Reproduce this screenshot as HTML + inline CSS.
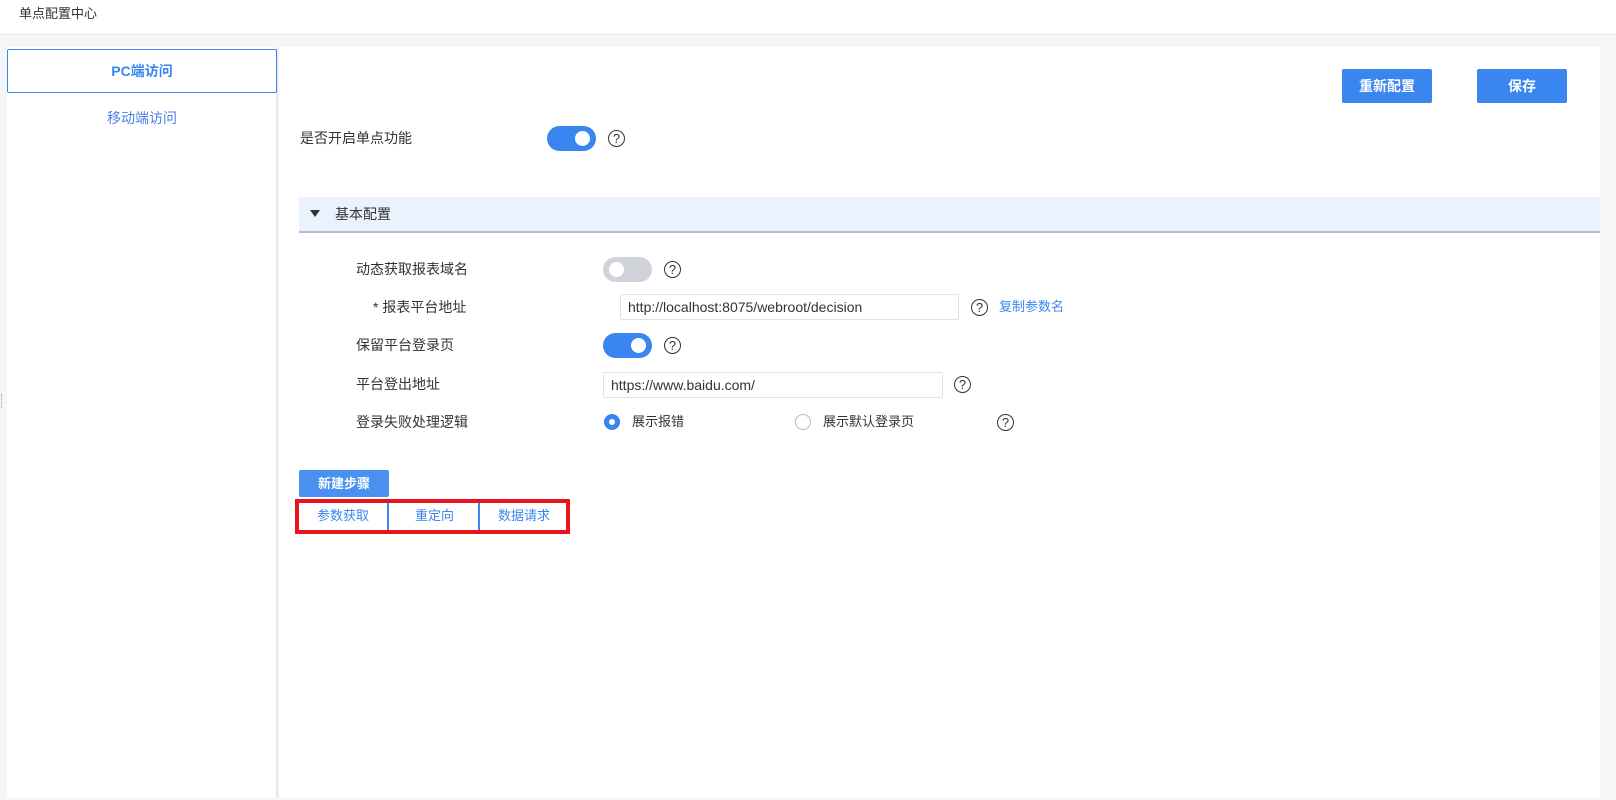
<!DOCTYPE html>
<html><head><meta charset="utf-8"><style>
*{margin:0;padding:0;box-sizing:border-box}
body{width:1616px;height:800px;background:#f5f6f8;font-family:"Liberation Sans","Noto Sans CJK SC",sans-serif;font-size:14px;color:#333;position:relative;overflow:hidden}
.a{position:absolute}
.lbl{position:absolute;line-height:20px;white-space:nowrap}
.tg{position:absolute;width:49px;height:25px;border-radius:13px;background:#3a86f0}
.tg::after{content:"";position:absolute;top:5px;right:6px;width:15px;height:15px;border-radius:50%;background:#fff}
.tg.off{background:#d0d3d9}
.tg.off::after{right:auto;left:6px}
.q{position:absolute;width:17px;height:17px;border:1.3px solid #333;border-radius:50%;font-size:13px;line-height:15px;text-align:center;color:#333;font-weight:normal}
.btn{position:absolute;background:#3a86f0;color:#fff;border-radius:2px;text-align:center;font-weight:bold}
.inp{position:absolute;border:1px solid #e0e2e6;border-radius:2px;background:#fff;padding-left:7px;line-height:24px;font-size:14px;color:#333}
</style></head><body>
<div class="a" style="left:0;top:0;width:1616px;height:35px;background:#fff;border-bottom:1px solid #e6e7ea"></div>
<div class="lbl" style="left:19px;top:4px;font-size:13px">单点配置中心</div>

<div class="a" style="left:7px;top:47px;width:271px;height:751px;background:#fff;border-right:2px solid #e8e8e8"></div>
<div class="a" style="left:7px;top:49px;width:270px;height:44px;border:1px solid #3a86f0;border-radius:2px;text-align:center;line-height:42px;color:#3a86f0;font-weight:bold;font-size:14px">PC端访问</div>
<div class="a" style="left:7px;top:107px;width:270px;text-align:center;line-height:22px;color:#4a7fe6;font-size:14px">移动端访问</div>
<div class="a" style="left:1px;top:394px;width:2px;height:14px;border-left:1px dotted #9aa"></div>

<div class="a" style="left:279px;top:47px;width:1321px;height:751px;background:#fff"></div>

<div class="btn" style="left:1342px;top:69px;width:90px;height:34px;line-height:34px">重新配置</div>
<div class="btn" style="left:1477px;top:69px;width:90px;height:34px;line-height:34px">保存</div>

<div class="lbl" style="left:300px;top:128px">是否开启单点功能</div>
<div class="tg" style="left:547px;top:126px"></div>
<div class="q" style="left:608px;top:130px">?</div>

<div class="a" style="left:299px;top:197px;width:1301px;height:36px;background:#eaf2fd;border-bottom:2px solid #b3bfcf"></div>
<div class="a" style="left:310px;top:210px;width:0;height:0;border-left:5px solid transparent;border-right:5px solid transparent;border-top:7px solid #333"></div>
<div class="lbl" style="left:335px;top:204px">基本配置</div>

<div class="lbl" style="left:356px;top:259px">动态获取报表域名</div>
<div class="tg off" style="left:603px;top:257px"></div>
<div class="q" style="left:664px;top:261px">?</div>

<div class="lbl" style="left:373px;top:297px">* 报表平台地址</div>
<div class="inp" style="left:620px;top:294px;width:339px;height:26px">http://localhost:8075/webroot/decision</div>
<div class="q" style="left:971px;top:299px">?</div>
<div class="lbl" style="left:999px;top:297px;color:#3a86f0;font-size:13px">复制参数名</div>

<div class="lbl" style="left:356px;top:335px">保留平台登录页</div>
<div class="tg" style="left:603px;top:333px"></div>
<div class="q" style="left:664px;top:337px">?</div>

<div class="lbl" style="left:356px;top:374px">平台登出地址</div>
<div class="inp" style="left:603px;top:372px;width:340px;height:26px">https://www.baidu.com/</div>
<div class="q" style="left:954px;top:376px">?</div>

<div class="lbl" style="left:356px;top:412px">登录失败处理逻辑</div>
<div class="a" style="left:604px;top:414px;width:16px;height:16px;border-radius:50%;border:5px solid #3a86f0;background:#fff"></div>
<div class="lbl" style="left:632px;top:412px;font-size:13px">展示报错</div>
<div class="a" style="left:795px;top:414px;width:16px;height:16px;border-radius:50%;border:1px solid #b5b8bd;background:#fff"></div>
<div class="lbl" style="left:823px;top:412px;font-size:13px">展示默认登录页</div>
<div class="q" style="left:997px;top:414px">?</div>

<div class="btn" style="left:299px;top:470px;width:90px;height:27px;line-height:27px;background:#4a90f0;font-size:13px">新建步骤</div>

<div class="a" style="left:295px;top:499px;width:275px;height:35px;border:4px solid #e8141d;background:#fff"></div>
<div class="a" style="left:299px;top:503px;width:90px;height:27px;line-height:25px;text-align:center;color:#3a86f0;font-size:13px;border-right:2px solid #3a86f0">参数获取</div>
<div class="a" style="left:391px;top:503px;width:89px;height:27px;line-height:25px;text-align:center;color:#3a86f0;font-size:13px;border-right:2px solid #3a86f0">重定向</div>
<div class="a" style="left:482px;top:503px;width:84px;height:27px;line-height:25px;text-align:center;color:#3a86f0;font-size:13px">数据请求</div>
</body></html>
